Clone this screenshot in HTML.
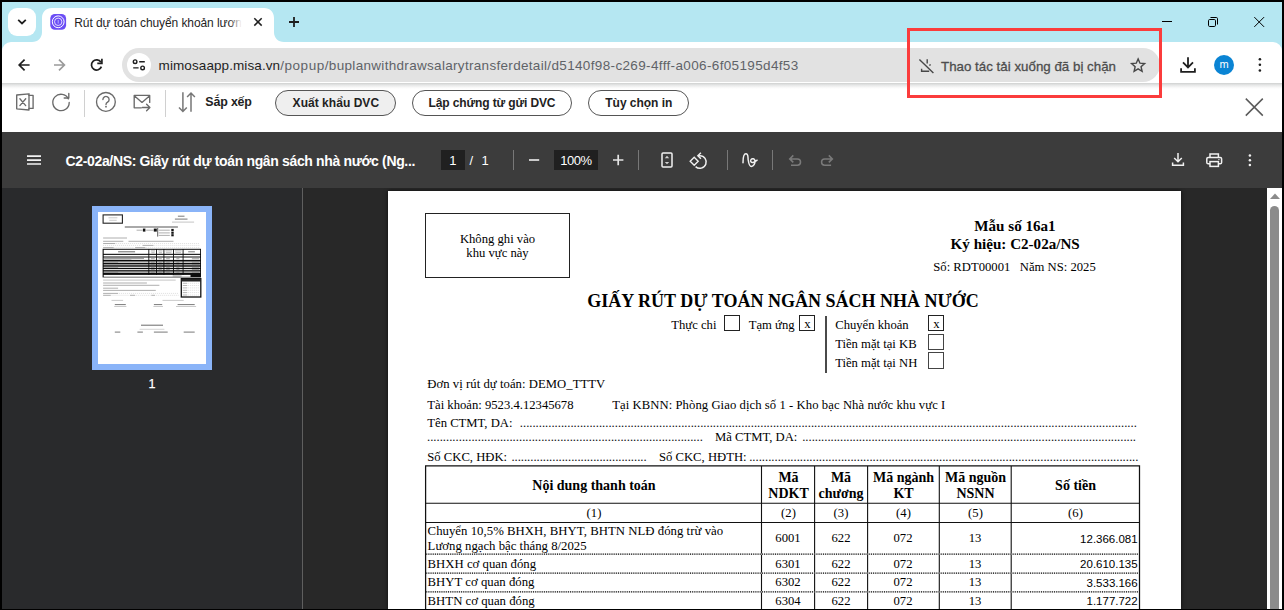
<!DOCTYPE html>
<html lang="vi">
<head>
<meta charset="utf-8">
<title>Rút dự toán chuyển khoản lương</title>
<style>
*{box-sizing:border-box;margin:0;padding:0}
html,body{width:1284px;height:610px;overflow:hidden;background:#000}
body{position:relative;font-family:"Liberation Sans",sans-serif}
.b,.s,.a,svg{position:absolute}
.s,.a{white-space:pre;line-height:1;color:#000}
.s{font-family:"Liberation Serif",serif}
.a{font-family:"Liberation Sans",sans-serif}
svg{overflow:visible}
.cb{position:absolute;width:16px;height:16px;border:1px solid #222;background:#fff}
.pill{position:absolute;height:26px;border:1px solid #555;border-radius:13px}
.vl{position:absolute;width:1px;background:#000}
.hl{position:absolute;height:1px;background:#000}
.dl{position:absolute;height:1px;background:repeating-linear-gradient(90deg,#000 0 1px,transparent 1px 2px)}
.dots{position:absolute;height:1px;background:repeating-linear-gradient(90deg,#333 0 1px,transparent 1px 2.11px)}
</style>
</head>
<body>
<!-- window -->
<div class="b" style="left:2px;top:2px;width:1280px;height:607px;background:#fff"></div>
<!-- tab strip -->
<div class="b" style="left:2px;top:2px;width:1280px;height:52px;background:#b5e7f2"></div>
<div class="b" style="left:8px;top:8px;width:28px;height:28px;border-radius:9px;background:#fff"></div>
<!-- tab with feet -->
<svg style="left:32px;top:8px" width="252" height="34" viewBox="0 0 252 34"><path d="M0 34 C6 34 10 30 10 24 V10 C10 4 14 0 20 0 H232 C238 0 242 4 242 10 V24 C242 30 246 34 252 34 Z" fill="#fff"/></svg>
<!-- toolbar -->
<div class="b" style="left:2px;top:42px;width:1280px;height:42px;background:#fff;border-radius:9px 9px 0 0"></div>
<div class="b" style="left:122px;top:48px;width:1038px;height:34px;border-radius:17px;background:#e2e2e2"></div>
<div class="b" style="left:126.8px;top:52.6px;width:24.2px;height:24.2px;border-radius:13px;background:#fff"></div>
<div class="b" style="left:2px;top:83px;width:1280px;height:6px;background:linear-gradient(#cfd1d0,#e6e7e7 35%,#fafafa 80%,#fff)"></div>
<!-- app toolbar pills -->
<div class="pill" style="left:275px;top:90px;width:121px;background:#efefef"></div>
<div class="pill" style="left:412px;top:90px;width:160px"></div>
<div class="pill" style="left:588px;top:90px;width:101px"></div>
<div class="b" style="left:84px;top:90px;width:1px;height:27px;background:#d0d0d0"></div>
<div class="b" style="left:165px;top:90px;width:1px;height:27px;background:#d0d0d0"></div>
<!-- pdf viewer -->
<div class="b" style="left:2px;top:132px;width:1280px;height:477px;background:#282828"></div>
<div class="b" style="left:388px;top:191px;width:793px;height:418px;background:#fff;box-shadow:0 0 4px rgba(0,0,0,.7)"></div>
<div class="b" style="left:2px;top:132px;width:1280px;height:56px;background:#3c3c3c"></div>
<div class="b" style="left:2px;top:188px;width:300px;height:421px;background:#292a2c"></div>
<div class="b" style="left:302px;top:188px;width:1px;height:421px;background:#5f5f5f"></div>
<div class="b" style="left:441px;top:150px;width:24px;height:20px;background:#202020"></div>
<div class="b" style="left:554px;top:150px;width:44px;height:20px;background:#202020"></div>
<div class="b" style="left:513px;top:150px;width:1.3px;height:20px;background:#787878"></div>
<div class="b" style="left:638px;top:150px;width:1.3px;height:20px;background:#787878"></div>
<div class="b" style="left:727px;top:150px;width:1.3px;height:20px;background:#787878"></div>
<div class="b" style="left:772px;top:150px;width:1.3px;height:20px;background:#787878"></div>
<!-- thumbnail -->
<div class="b" style="left:92px;top:206px;width:120px;height:164px;background:#8ab4f8"></div>
<div class="b" style="left:98px;top:212px;width:108px;height:152px;background:#fff"></div>
<!-- scrollbar -->
<div class="b" style="left:1267px;top:188px;width:15px;height:421px;background:#fff"></div>
<div class="b" style="left:1270px;top:206px;width:9px;height:420px;border-radius:4.5px;background:#8b8b8b"></div>
<svg style="left:1270px;top:193px" width="10" height="6" viewBox="0 0 10 6"><path d="M0 6 L5 0.5 L10 6Z" fill="#8b8b8b"/></svg>
<!-- page -->
<div class="b" style="left:425px;top:213px;width:145px;height:65px;border:1px solid #222"></div>
<!-- checkboxes -->
<div class="cb" style="left:724px;top:315px"></div>
<div class="cb" style="left:799px;top:315px"></div>
<div class="cb" style="left:928px;top:315px"></div>
<div class="cb" style="left:928px;top:334px;border-color:#444"></div>
<div class="cb" style="left:928px;top:352px;height:17px;border-color:#444"></div>
<div class="b" style="left:825.4px;top:315.5px;width:1.5px;height:57px;background:#4a4a4a"></div>
<!-- table -->
<svg style="left:0;top:460px" width="1284" height="150" viewBox="0 460 1284 150" fill="none">
 <g stroke="#111" stroke-width="1.25">
  <path d="M425 465.9 H1140.1 M425.6 465.3 V609 M1139.5 465.3 V609"/>
 </g>
 <g stroke="#111" stroke-width="1.1">
  <path d="M425 503.2 H1140 M425 522.5 H1140"/>
  <path d="M761.5 466 V609 M814.6 466 V609 M867.6 466 V609 M939.3 466 V609 M1011.2 466 V609"/>
 </g>
 <g stroke="#dcdcdc" stroke-width="1.3">
  <path d="M426.2 554.2 H1139 M426.2 573.1 H1139 M426.2 591.8 H1139"/>
 </g>
 <g stroke="#000" stroke-width="1.3" stroke-dasharray="1 1.18">
  <path d="M426.2 554.2 H1139 M426.2 573.1 H1139 M426.2 591.8 H1139"/>
 </g>
</svg>
<!-- chrome icons -->
<svg style="left:0;top:0" width="1284" height="130" viewBox="0 0 1284 130" fill="none" stroke-linecap="butt">
 <path d="M18.2 19.8 L22 23.4 L25.8 19.8" stroke="#1f1f1f" stroke-width="1.8" fill="none"/>
 <rect x="50.3" y="14" width="15.8" height="15.8" rx="4.6" fill="#6b4df5"/>
 <circle cx="58.2" cy="21.8" r="5.9" stroke="#fff" stroke-width="1"/>
 <circle cx="58.2" cy="21.8" r="3.7" stroke="#efeaff" stroke-width="0.9"/>
 <path d="M58.2 20 V23.6" stroke="#b9adff" stroke-width="1"/>
 <path d="M254.3 18.2 L261.7 25.6 M261.7 18.2 L254.3 25.6" stroke="#1f1f1f" stroke-width="1.5"/>
 <path d="M289 22 H299 M294 17 V27" stroke="#1f1f1f" stroke-width="1.8"/>
 <!-- back -->
 <path d="M29.6 65 H19.4 M24.6 59.6 L19.2 65 L24.6 70.4" stroke="#1f1f1f" stroke-width="1.7" fill="none"/>
 <path d="M54 65 H64.2 M59 59.6 L64.4 65 L59 70.4" stroke="#9b9b9b" stroke-width="1.7" fill="none"/>
 <!-- reload -->
 <path d="M100.9 62.2 A5.1 5.1 0 1 0 101.4 66.6" stroke="#1f1f1f" stroke-width="1.7" fill="none"/>
 <path d="M101.9 58.8 V63.4 H97.3" stroke="#1f1f1f" stroke-width="1.7" fill="none"/>
 <!-- tune -->
 <circle cx="135.1" cy="61.7" r="1.8" stroke="#1f1f1f" stroke-width="1.4"/>
 <path d="M139.2 61.7 H144.8 M133.2 67.9 H138.6" stroke="#1f1f1f" stroke-width="1.4"/>
 <circle cx="142.6" cy="67.9" r="1.8" stroke="#1f1f1f" stroke-width="1.4"/>
 <!-- download blocked -->
 <path d="M919.4 59.6 L933.4 73 M927.2 59.2 V63.6 M929.4 65.6 L930.6 64.4 M921.6 68.8 V71.2 H929.2" stroke="#474747" stroke-width="1.4" fill="none"/>
 <!-- star -->
 <path d="M1138.1 58.9 L1139.95 63.2 L1144.6 63.6 L1141.05 66.7 L1142.1 71.3 L1138.1 68.85 L1134.1 71.3 L1135.15 66.7 L1131.6 63.6 L1136.25 63.2 Z" stroke="#474747" stroke-width="1.4" fill="none" stroke-linejoin="miter"/>
 <!-- download -->
 <path d="M1188 57.3 V67 M1183 62.4 L1188 67.4 L1193 62.4 M1181.1 68.2 V71.8 H1194.9 V68.2" stroke="#1f1f1f" stroke-width="1.8" fill="none"/>
 <circle cx="1224" cy="65" r="10" fill="#0a84d4"/>
 <circle cx="1259.9" cy="59.2" r="1.3" fill="#1f1f1f"/><circle cx="1259.9" cy="64.8" r="1.3" fill="#1f1f1f"/><circle cx="1259.9" cy="70.5" r="1.3" fill="#1f1f1f"/>
 <!-- window controls -->
 <path d="M1162 21.5 H1172" stroke="#000" stroke-width="1"/>
 <rect x="1208.5" y="19.5" width="7" height="7" rx="1.2" stroke="#000" stroke-width="1"/>
 <path d="M1210.5 17.5 H1216.3 Q1217.5 17.5 1217.5 18.7 V24.5" stroke="#000" stroke-width="1" fill="none"/>
 <path d="M1254.3 17.1 L1264.1 26.9 M1264.1 17.1 L1254.3 26.9" stroke="#000" stroke-width="1"/>
 <!-- app close X -->
 <path d="M1245.8 98.6 L1262.8 115.6 M1262.8 98.6 L1245.8 115.6" stroke="#5a5a5a" stroke-width="1.5"/>
 <!-- app toolbar icons -->
 <g stroke="#6a6a6a" stroke-width="1.35" fill="none" stroke-linejoin="round" stroke-linecap="round">
  <path d="M16.7 95 L29 93.8 V110 L16.7 108.8 Z"/>
  <path d="M29 95.4 H33.1 V108.4 H29"/>
  <path d="M19.9 98.8 L25.7 105.6 M25.7 98.8 L19.9 105.6"/>
  <path d="M68.4 98.9 A8.2 8.2 0 1 0 69.2 102.4"/>
  <path d="M68.8 93.4 V98 H64.2"/>
  <circle cx="105.9" cy="101.9" r="9.4"/>
  <path d="M102.9 99.6 A3.1 3.1 0 1 1 107.6 102.2 Q106 103.2 106 104.6"/>
  <path d="M134.2 107.8 V95.4 H149.7 V102.4 M134.2 107.8 H141.4 M134.6 96 L142 102.4 L149.4 96"/>
  <path d="M142.4 107.5 H149.6 M146.6 104.2 L149.9 107.5 L146.6 110.8"/>
 </g>
 <circle cx="106" cy="106.7" r="0.9" fill="#6a6a6a"/>
 <g stroke="#777" stroke-width="1.5" fill="none">
  <path d="M182.9 92.3 V111.2 M179 107.4 L182.9 111.4 L186.8 107.4"/>
  <path d="M191 111.8 V93.2 M187.1 97 L191 93 L194.9 97"/>
 </g>
</svg>
<!-- pdf toolbar icons -->
<svg style="left:0;top:130px" width="1284" height="60" viewBox="0 130 1284 60" fill="none">
 <path d="M27 156.2 H41 M27 160.1 H41 M27 164 H41" stroke="#f1f1f1" stroke-width="1.7"/>
 <path d="M529 160 H539.2" stroke="#e4e4e4" stroke-width="1.7"/>
 <path d="M613 160 H623.4 M618.2 154.8 V165.2" stroke="#e4e4e4" stroke-width="1.7"/>
 <rect x="662" y="152.9" width="10" height="14.2" rx="1" stroke="#f1f1f1" stroke-width="1.5"/>
 <path d="M664.8 158.2 L667 155.8 L669.2 158.2 Z M664.8 161.9 L667 164.3 L669.2 161.9 Z" fill="#d0d0d0"/>
 <path d="M694.2 157.3 L698.2 161.3 L694.2 165.3 L690.2 161.3 Z" stroke="#f1f1f1" stroke-width="1.4"/>
 <path d="M698.4 155.7 H699.8 A6.3 6.3 0 1 1 695.6 166.6" stroke="#f1f1f1" stroke-width="1.5"/>
 <path d="M700.9 152.7 L697.9 155.7 L700.9 158.7" stroke="#f1f1f1" stroke-width="1.5"/>
 <path d="M743 162.7 C743 158.5 743.6 153.8 745.9 153.8 C748.6 153.8 747.8 157.5 748.2 160 C748.7 163.5 749.4 166.5 751.4 166.5 C753.6 166.5 755.2 163.6 755 161 C754.8 158.6 752.2 158 751 159.6 C749.8 161.3 751.3 162.9 753.2 162.4 C754.6 162 755.9 161 757.1 160.2" stroke="#f1f1f1" stroke-width="1.5" stroke-linecap="round"/>
 <g stroke="#7a7a7a" stroke-width="1.5">
  <path d="M793.3 155.4 L789.7 158.9 L793.3 162.4 M789.9 158.9 H797.4 A3.15 3.15 0 0 1 797.4 165.2 H791"/>
  <path d="M828.8 155.4 L832.4 158.9 L828.8 162.4 M832.2 158.9 H824.7 A3.15 3.15 0 0 0 824.7 165.2 H831.1"/>
 </g>
 <!-- right -->
 <g stroke="#f1f1f1" stroke-width="1.5">
  <path d="M1178 153 V161.6 M1174.2 158 L1178 161.8 L1181.8 158 M1172.6 162.6 V165.2 H1183.4 V162.6"/>
  <path d="M1210 157.4 V153.9 H1218.4 V157.4"/>
  <rect x="1206.8" y="157.4" width="14.8" height="6.4" rx="1.4"/>
  <rect x="1210" y="161.6" width="8.4" height="4.8" fill="#3c3c3c"/>
 </g>
 <circle cx="1218.9" cy="159.6" r="0.7" fill="#f1f1f1"/>
 <circle cx="1249.9" cy="155.4" r="1.25" fill="#f1f1f1"/><circle cx="1249.9" cy="160.2" r="1.25" fill="#f1f1f1"/><circle cx="1249.9" cy="165" r="1.25" fill="#f1f1f1"/>
</svg>
<!-- thumbnail content -->
<svg style="left:0;top:200px;filter:blur(0.35px)" width="300" height="180" viewBox="0 200 300 180" fill="none">
<rect x="103.1" y="214.9" width="19.3" height="8.3" fill="none" stroke="#222" stroke-width="1.1"/>
<path d="M108.5 217.8 H117.4" stroke="#b5b5b5" stroke-width="0.7"/>
<path d="M109.3 220.3 H116.7" stroke="#b5b5b5" stroke-width="0.7"/>
<path d="M177.9 216.2 H184.5" stroke="#6a6a6a" stroke-width="0.9"/>
<path d="M174.9 219.1 H187.5" stroke="#6a6a6a" stroke-width="0.9"/>
<path d="M172.0 222.1 H194.1" stroke="#b5b5b5" stroke-width="0.8"/>
<path d="M124.8 227.0 H177.9" stroke="#555" stroke-width="1.1"/>
<path d="M136.6 230.2 H142.5" stroke="#9a9a9a" stroke-width="0.8"/>
<rect x="142.9" y="228.6" width="2.5" height="3.0" fill="#111"/>
<path d="M146.2 230.2 H153.5" stroke="#9a9a9a" stroke-width="0.8"/>
<rect x="153.8" y="228.6" width="3.0" height="3.0" fill="#111"/>
<path d="M157.7 228.0 V236.6" stroke="#333" stroke-width="0.8"/>
<path d="M158.7 230.2 H169.8" stroke="#9a9a9a" stroke-width="0.8"/>
<path d="M158.7 232.9 H169.8" stroke="#9a9a9a" stroke-width="0.8"/>
<path d="M158.7 235.4 H169.8" stroke="#9a9a9a" stroke-width="0.8"/>
<rect x="171.3" y="228.9" width="2.4" height="2.5" fill="#111"/>
<rect x="171.3" y="232.0" width="2.4" height="1.8" fill="#111"/>
<rect x="171.3" y="234.2" width="2.4" height="2.1" fill="#111"/>
<path d="M103.1 238.0 H127.0" stroke="#9a9a9a" stroke-width="0.8"/>
<path d="M103.1 241.3 H123.3" stroke="#9a9a9a" stroke-width="0.8"/>
<path d="M128.5 241.3 H173.5" stroke="#9a9a9a" stroke-width="0.8"/>
<path d="M103.1 243.5 H115.2" stroke="#9a9a9a" stroke-width="0.8"/>
<path d="M115.9 243.5 H199.3" stroke="#d0d0d0" stroke-width="0.7" stroke-dasharray="1 1"/>
<path d="M103.1 245.4 H140.3" stroke="#d0d0d0" stroke-width="0.7" stroke-dasharray="1 1"/>
<path d="M142.5 245.4 H153.5" stroke="#9a9a9a" stroke-width="0.8"/>
<path d="M154.3 245.4 H199.3" stroke="#d0d0d0" stroke-width="0.7" stroke-dasharray="1 1"/>
<path d="M103.1 247.6 H113.7" stroke="#9a9a9a" stroke-width="0.8"/>
<path d="M114.4 247.6 H134.1" stroke="#d0d0d0" stroke-width="0.7" stroke-dasharray="1 1"/>
<path d="M135.1 247.6 H145.4" stroke="#9a9a9a" stroke-width="0.8"/>
<path d="M146.2 247.6 H199.3" stroke="#d0d0d0" stroke-width="0.7" stroke-dasharray="1 1"/>
<rect x="102.6" y="248.8" width="98.4" height="28.6" fill="#0c0c0c"/>
<rect x="103.7" y="249.8" width="96.4" height="4.0" fill="#fff"/>
<path d="M118.1 251.8 H135.1" stroke="#6a6a6a" stroke-width="1.0"/>
<path d="M150.9 250.9 H155.0" stroke="#9a9a9a" stroke-width="0.8"/>
<path d="M151.3 252.8 H154.6" stroke="#9a9a9a" stroke-width="0.8"/>
<path d="M158.3 250.9 H162.4" stroke="#9a9a9a" stroke-width="0.8"/>
<path d="M158.7 252.8 H162.0" stroke="#9a9a9a" stroke-width="0.8"/>
<path d="M165.4 250.9 H172.0" stroke="#9a9a9a" stroke-width="0.8"/>
<path d="M165.8 252.8 H171.5" stroke="#9a9a9a" stroke-width="0.8"/>
<path d="M174.9 250.9 H181.6" stroke="#9a9a9a" stroke-width="0.8"/>
<path d="M175.4 252.8 H181.1" stroke="#9a9a9a" stroke-width="0.8"/>
<path d="M188.2 251.8 H194.9" stroke="#6a6a6a" stroke-width="0.9"/>
<rect x="103.7" y="254.9" width="96.4" height="1.6" fill="#fff"/>
<rect x="103.7" y="257.5" width="96.4" height="2.4" fill="#fff"/>
<rect x="103.7" y="261.5" width="96.4" height="1.3" fill="#f4f4f4"/>
<rect x="103.7" y="264.3" width="96.4" height="1.0" fill="#cfcfcf"/>
<rect x="103.7" y="266.7" width="96.4" height="1.2" fill="#ececec"/>
<rect x="103.7" y="269.0" width="96.4" height="1.2" fill="#e0e0e0"/>
<rect x="103.7" y="271.5" width="96.4" height="1.2" fill="#ececec"/>
<rect x="103.7" y="274.9" width="86.8" height="1.9" fill="#fff"/>
<path d="M148.8 249.1 V274.9" stroke="#0c0c0c" stroke-width="0.9"/>
<path d="M156.5 249.1 V274.9" stroke="#0c0c0c" stroke-width="0.9"/>
<path d="M163.9 249.1 V274.9" stroke="#0c0c0c" stroke-width="0.9"/>
<path d="M173.5 249.1 V274.9" stroke="#0c0c0c" stroke-width="0.9"/>
<path d="M183.1 249.1 V274.9" stroke="#0c0c0c" stroke-width="0.9"/>
<path d="M104.1 258.3 H144.0" stroke="#6a6a6a" stroke-width="0.8"/>
<path d="M104.1 259.3 H131.4" stroke="#9a9a9a" stroke-width="0.6"/>
<path d="M150.9 258.7 H154.7" stroke="#6a6a6a" stroke-width="0.6"/>
<path d="M158.6 258.7 H161.8" stroke="#6a6a6a" stroke-width="0.6"/>
<path d="M166.2 258.7 H169.8" stroke="#6a6a6a" stroke-width="0.6"/>
<path d="M176.4 258.7 H179.4" stroke="#6a6a6a" stroke-width="0.6"/>
<path d="M191.9 258.7 H199.3" stroke="#6a6a6a" stroke-width="0.6"/>
<path d="M150.9 262.1 H154.7" stroke="#6a6a6a" stroke-width="0.6"/>
<path d="M158.6 262.1 H161.8" stroke="#6a6a6a" stroke-width="0.6"/>
<path d="M166.2 262.1 H169.8" stroke="#6a6a6a" stroke-width="0.6"/>
<path d="M176.4 262.1 H179.4" stroke="#6a6a6a" stroke-width="0.6"/>
<path d="M191.9 262.1 H199.3" stroke="#6a6a6a" stroke-width="0.6"/>
<path d="M150.9 264.7 H154.7" stroke="#6a6a6a" stroke-width="0.6"/>
<path d="M158.6 264.7 H161.8" stroke="#6a6a6a" stroke-width="0.6"/>
<path d="M166.2 264.7 H169.8" stroke="#6a6a6a" stroke-width="0.6"/>
<path d="M176.4 264.7 H179.4" stroke="#6a6a6a" stroke-width="0.6"/>
<path d="M191.9 264.7 H199.3" stroke="#6a6a6a" stroke-width="0.6"/>
<path d="M150.9 267.3 H154.7" stroke="#6a6a6a" stroke-width="0.6"/>
<path d="M158.6 267.3 H161.8" stroke="#6a6a6a" stroke-width="0.6"/>
<path d="M166.2 267.3 H169.8" stroke="#6a6a6a" stroke-width="0.6"/>
<path d="M176.4 267.3 H179.4" stroke="#6a6a6a" stroke-width="0.6"/>
<path d="M191.9 267.3 H199.3" stroke="#6a6a6a" stroke-width="0.6"/>
<path d="M150.9 269.6 H154.7" stroke="#6a6a6a" stroke-width="0.6"/>
<path d="M158.6 269.6 H161.8" stroke="#6a6a6a" stroke-width="0.6"/>
<path d="M166.2 269.6 H169.8" stroke="#6a6a6a" stroke-width="0.6"/>
<path d="M176.4 269.6 H179.4" stroke="#6a6a6a" stroke-width="0.6"/>
<path d="M191.9 269.6 H199.3" stroke="#6a6a6a" stroke-width="0.6"/>
<path d="M150.9 272.1 H154.7" stroke="#6a6a6a" stroke-width="0.6"/>
<path d="M158.6 272.1 H161.8" stroke="#6a6a6a" stroke-width="0.6"/>
<path d="M166.2 272.1 H169.8" stroke="#6a6a6a" stroke-width="0.6"/>
<path d="M176.4 272.1 H179.4" stroke="#6a6a6a" stroke-width="0.6"/>
<path d="M191.9 272.1 H199.3" stroke="#6a6a6a" stroke-width="0.6"/>
<path d="M104.1 262.1 H118.1" stroke="#6a6a6a" stroke-width="0.6"/>
<path d="M104.1 267.3 H118.1" stroke="#6a6a6a" stroke-width="0.6"/>
<path d="M104.1 272.1 H118.1" stroke="#6a6a6a" stroke-width="0.6"/>
<path d="M172.7 276.0 H181.6" stroke="#6a6a6a" stroke-width="0.7"/>
<path d="M103.1 280.1 H175.7" stroke="#b5b5b5" stroke-width="0.8"/>
<path d="M103.1 283.0 H146.9" stroke="#9a9a9a" stroke-width="0.8"/>
<path d="M103.1 285.3 H159.4" stroke="#9a9a9a" stroke-width="0.8"/>
<path d="M103.1 288.2 H118.1" stroke="#9a9a9a" stroke-width="0.8"/>
<path d="M103.1 290.4 H155.8" stroke="#9a9a9a" stroke-width="0.8"/>
<path d="M103.1 293.4 H118.1" stroke="#9a9a9a" stroke-width="0.8"/>
<path d="M118.9 293.4 H178.6" stroke="#d0d0d0" stroke-width="0.7" stroke-dasharray="1 1"/>
<path d="M103.1 295.3 H110.8" stroke="#9a9a9a" stroke-width="0.8"/>
<path d="M111.5 295.3 H129.2" stroke="#d0d0d0" stroke-width="0.7" stroke-dasharray="1 1"/>
<path d="M129.9 295.3 H135.1" stroke="#9a9a9a" stroke-width="0.8"/>
<path d="M135.8 295.3 H150.6" stroke="#d0d0d0" stroke-width="0.7" stroke-dasharray="1 1"/>
<path d="M151.3 295.3 H155.0" stroke="#9a9a9a" stroke-width="0.8"/>
<path d="M155.8 295.3 H178.6" stroke="#d0d0d0" stroke-width="0.7" stroke-dasharray="1 1"/>
<rect x="181.3" y="278.6" width="19.5" height="18.4" fill="#fff" stroke="#111" stroke-width="1.3"/>
<rect x="181.3" y="278.8" width="19.5" height="2.7" fill="#222"/>
<path d="M182.8 283.3 H187.2" stroke="#9a9a9a" stroke-width="0.7"/>
<path d="M187.8 283.3 H199.3" stroke="#c8c8c8" stroke-width="0.6" stroke-dasharray="1 1"/>
<path d="M182.8 285.5 H187.2" stroke="#9a9a9a" stroke-width="0.7"/>
<path d="M187.8 285.5 H199.3" stroke="#c8c8c8" stroke-width="0.6" stroke-dasharray="1 1"/>
<path d="M182.8 287.9 H187.2" stroke="#9a9a9a" stroke-width="0.7"/>
<path d="M187.8 287.9 H199.3" stroke="#c8c8c8" stroke-width="0.6" stroke-dasharray="1 1"/>
<path d="M182.8 290.3 H187.2" stroke="#9a9a9a" stroke-width="0.7"/>
<path d="M187.8 290.3 H199.3" stroke="#c8c8c8" stroke-width="0.6" stroke-dasharray="1 1"/>
<path d="M182.8 292.6 H187.2" stroke="#9a9a9a" stroke-width="0.7"/>
<path d="M187.8 292.6 H199.3" stroke="#c8c8c8" stroke-width="0.6" stroke-dasharray="1 1"/>
<path d="M182.8 295.0 H187.2" stroke="#9a9a9a" stroke-width="0.7"/>
<path d="M187.8 295.0 H199.3" stroke="#c8c8c8" stroke-width="0.6" stroke-dasharray="1 1"/>
<path d="M111.5 300.4 H123.1" stroke="#b5b5b5" stroke-width="0.7"/>
<path d="M162.5 300.4 H183.7" stroke="#b5b5b5" stroke-width="0.7"/>
<path d="M114.8 304.6 H125.8" stroke="#6a6a6a" stroke-width="0.9"/>
<path d="M153.9 304.6 H162.2" stroke="#6a6a6a" stroke-width="0.9"/>
<path d="M177.6 304.6 H194.7" stroke="#6a6a6a" stroke-width="0.9"/>
<path d="M114.2 306.5 H126.4" stroke="#b5b5b5" stroke-width="0.7"/>
<path d="M153.4 306.5 H163.0" stroke="#b5b5b5" stroke-width="0.7"/>
<path d="M176.0 306.5 H196.1" stroke="#b5b5b5" stroke-width="0.7"/>
<path d="M141.0 325.2 H163.0" stroke="#6a6a6a" stroke-width="1.0"/>
<path d="M139.6 329.3 H164.4" stroke="#c4c4c4" stroke-width="0.7"/>
<path d="M114.8 332.1 H120.3" stroke="#6a6a6a" stroke-width="0.9"/>
<path d="M137.4 332.1 H142.9" stroke="#6a6a6a" stroke-width="0.9"/>
<path d="M153.9 332.1 H167.7" stroke="#6a6a6a" stroke-width="0.9"/>
<path d="M183.7 332.1 H194.7" stroke="#6a6a6a" stroke-width="0.9"/>
</svg>

<div class="a" style="left:74.3px;top:17px;font-size:12px;color:#1f1f1f;letter-spacing:-0.088px">Rút dự toán chuyển khoản lươn</div>
<div class="a" style="left:158.6px;top:59px;font-size:13.5px;color:#1f1f1f;letter-spacing:0.091px">mimosaapp.misa.vn</div>
<div class="a" style="left:280.2px;top:59px;font-size:13.5px;color:#5f6368;letter-spacing:0.551px">/popup</div>
<div class="a" style="left:324.8px;top:59px;font-size:13.5px;color:#5f6368;letter-spacing:0.311px">/buplanwithdrawsalarytransferdetail</div>
<div class="a" style="left:547.3px;top:59px;font-size:13.5px;color:#5f6368;letter-spacing:0.354px">/d5140f98-c269-4fff-a006-6f05195d4f53</div>
<div class="a" style="left:941.0px;top:60px;font-size:13.3px;color:#4d4d4d;letter-spacing:0.018px;-webkit-text-stroke:0.3px #4d4d4d">Thao tác tải xuống đã bị chặn</div>
<div class="a" style="left:1219.4px;top:59px;font-size:11px;color:#fff">m</div>
<div class="a" style="left:205.3px;top:96px;font-size:12.4px;font-weight:bold;color:#222;letter-spacing:-0.147px">Sắp xếp</div>
<div class="a" style="left:292.6px;top:97px;font-size:12px;font-weight:bold;color:#222;letter-spacing:0.037px">Xuất khẩu DVC</div>
<div class="a" style="left:428.6px;top:97px;font-size:12px;font-weight:bold;color:#222;letter-spacing:-0.130px">Lập chứng từ gửi DVC</div>
<div class="a" style="left:605.3px;top:97px;font-size:12px;font-weight:bold;color:#222;letter-spacing:-0.031px">Tùy chọn in</div>
<div class="a" style="left:65.5px;top:154px;font-size:14px;font-weight:bold;color:#fff;letter-spacing:-0.346px">C2-02a/NS: Giấy rút dự toán ngân sách nhà nước (Ng...</div>
<div class="a" style="left:449.3px;top:154px;font-size:13px;color:#fff">1</div>
<div class="a" style="left:469.4px;top:154px;font-size:13px;color:#fff">/</div>
<div class="a" style="left:481.6px;top:154px;font-size:13px;color:#fff">1</div>
<div class="a" style="left:560.2px;top:154px;font-size:13px;color:#fff;letter-spacing:-0.438px">100%</div>
<div class="a" style="left:148.5px;top:378px;font-size:12.5px;color:#fff;-webkit-text-stroke:0.25px #fff">1</div>
<div class="s" style="left:459.9px;top:233px;font-size:12.67px">Không ghi vào</div>
<div class="s" style="left:466.3px;top:247px;font-size:12.67px">khu vực này</div>
<div class="s" style="left:974.3px;top:219px;font-size:15.1px;font-weight:bold">Mẫu số 16a1</div>
<div class="s" style="left:950.6px;top:237px;font-size:15.1px;font-weight:bold">Ký hiệu: C2-02a/NS</div>
<div class="s" style="left:933.3px;top:261px;font-size:12.67px">Số: RDT00001   Năm NS: 2025</div>
<div class="s" style="left:587.2px;top:292px;font-size:18px;font-weight:bold">GIẤY RÚT DỰ TOÁN NGÂN SÁCH NHÀ NƯỚC</div>
<div class="s" style="left:671.3px;top:319px;font-size:12.67px">Thực chi</div>
<div class="s" style="left:748.7px;top:319px;font-size:12.67px">Tạm ứng</div>
<div class="s" style="left:804.3px;top:318px;font-size:12.67px">x</div>
<div class="s" style="left:933.3px;top:318px;font-size:12.67px">x</div>
<div class="s" style="left:835.2px;top:319px;font-size:12.67px">Chuyển khoản</div>
<div class="s" style="left:835.2px;top:338px;font-size:12.67px">Tiền mặt tại KB</div>
<div class="s" style="left:835.2px;top:357px;font-size:12.67px">Tiền mặt tại NH</div>
<div class="s" style="left:427.3px;top:378px;font-size:12.67px;letter-spacing:0.055px">Đơn vị rút dự toán: DEMO_TTTV</div>
<div class="s" style="left:427.3px;top:399px;font-size:12.67px">Tài khoản: 9523.4.12345678</div>
<div class="s" style="left:612.2px;top:399px;font-size:12.67px;letter-spacing:0.071px">Tại KBNN: Phòng Giao dịch số 1 - Kho bạc Nhà nước khu vực I</div>
<div class="s" style="left:427.3px;top:417px;font-size:12.67px">Tên CTMT, DA:</div>
<div class="s" style="left:715.0px;top:431px;font-size:12.67px">Mã CTMT, DA:</div>
<div class="s" style="left:427.3px;top:451px;font-size:12.67px">Số CKC, HĐK:</div>
<div class="s" style="left:659.0px;top:451px;font-size:12.67px">Số CKC, HĐTH:</div>
<div class="s" style="left:532.3px;top:479px;font-size:14px;font-weight:bold">Nội dung thanh toán</div>
<div class="s" style="left:778.4px;top:471px;font-size:14px;font-weight:bold">Mã</div>
<div class="s" style="left:768.3px;top:487px;font-size:14px;font-weight:bold">NDKT</div>
<div class="s" style="left:830.9px;top:471px;font-size:14px;font-weight:bold">Mã</div>
<div class="s" style="left:818.5px;top:487px;font-size:14px;font-weight:bold">chương</div>
<div class="s" style="left:873.0px;top:471px;font-size:14px;font-weight:bold">Mã ngành</div>
<div class="s" style="left:893.4px;top:487px;font-size:14px;font-weight:bold">KT</div>
<div class="s" style="left:945.0px;top:471px;font-size:14px;font-weight:bold">Mã nguồn</div>
<div class="s" style="left:956.4px;top:487px;font-size:14px;font-weight:bold">NSNN</div>
<div class="s" style="left:1055.1px;top:479px;font-size:14px;font-weight:bold">Số tiền</div>
<div class="s" style="left:586.6px;top:507px;font-size:12.67px">(1)</div>
<div class="s" style="left:781.1px;top:507px;font-size:12.67px">(2)</div>
<div class="s" style="left:833.6px;top:507px;font-size:12.67px">(3)</div>
<div class="s" style="left:896.1px;top:507px;font-size:12.67px">(4)</div>
<div class="s" style="left:968.1px;top:507px;font-size:12.67px">(5)</div>
<div class="s" style="left:1068.1px;top:507px;font-size:12.67px">(6)</div>
<div class="s" style="left:427.6px;top:525px;font-size:12.78px;letter-spacing:0.029px">Chuyển 10,5% BHXH, BHYT, BHTN NLĐ đóng trừ vào</div>
<div class="s" style="left:427.6px;top:540px;font-size:12.78px">Lương ngạch bậc tháng 8/2025</div>
<div class="s" style="left:427.6px;top:558px;font-size:12.78px">BHXH cơ quan đóng</div>
<div class="s" style="left:427.6px;top:576px;font-size:12.78px">BHYT cơ quan đóng</div>
<div class="s" style="left:427.6px;top:595px;font-size:12.78px">BHTN cơ quan đóng</div>
<div class="s" style="left:775.3px;top:532px;font-size:12.67px">6001</div>
<div class="s" style="left:831.5px;top:532px;font-size:12.67px">622</div>
<div class="s" style="left:893.5px;top:532px;font-size:12.67px">072</div>
<div class="s" style="left:968.7px;top:532px;font-size:12.67px">13</div>
<div class="a" style="left:1080.1px;top:534px;font-size:11.5px">12.366.081</div>
<div class="s" style="left:775.3px;top:558px;font-size:12.67px">6301</div>
<div class="s" style="left:831.5px;top:558px;font-size:12.67px">622</div>
<div class="s" style="left:893.5px;top:558px;font-size:12.67px">072</div>
<div class="s" style="left:968.7px;top:558px;font-size:12.67px">13</div>
<div class="a" style="left:1080.1px;top:559px;font-size:11.5px">20.610.135</div>
<div class="s" style="left:775.3px;top:576px;font-size:12.67px">6302</div>
<div class="s" style="left:831.5px;top:576px;font-size:12.67px">622</div>
<div class="s" style="left:893.5px;top:576px;font-size:12.67px">072</div>
<div class="s" style="left:968.7px;top:576px;font-size:12.67px">13</div>
<div class="a" style="left:1086.5px;top:578px;font-size:11.5px">3.533.166</div>
<div class="s" style="left:775.3px;top:595px;font-size:12.67px">6304</div>
<div class="s" style="left:831.5px;top:595px;font-size:12.67px">622</div>
<div class="s" style="left:893.5px;top:595px;font-size:12.67px">072</div>
<div class="s" style="left:968.7px;top:595px;font-size:12.67px">13</div>
<div class="a" style="left:1086.5px;top:596px;font-size:11.5px">1.177.722</div>
<div class="s" style="left:519.8px;top:417px;font-size:12.67px;color:#111">...................................................................................................................................................................................................</div>
<div class="s" style="left:427.0px;top:431px;font-size:12.67px;color:#111;letter-spacing:0.007px">.......................................................................................</div>
<div class="s" style="left:802.2px;top:431px;font-size:12.67px;color:#111;letter-spacing:-0.015px">..........................................................................................................</div>
<div class="s" style="left:511.4px;top:451px;font-size:12.67px;color:#111;letter-spacing:-0.020px">...........................................</div>
<div class="s" style="left:749.2px;top:451px;font-size:12.67px;color:#111">...........................................................................................................................</div>
<!-- tab title fade -->
<div class="b" style="left:229px;top:12px;width:15px;height:22px;background:linear-gradient(90deg,rgba(255,255,255,0),#fff 85%)"></div>
<!-- red highlight rectangle -->
<div class="b" style="left:907px;top:28px;width:255px;height:70px;border:3px solid #fb3c3c"></div>
<!-- outer frame -->
<div class="b" style="left:0;top:609px;width:1284px;height:1px;background:#000"></div>

</body>
</html>
